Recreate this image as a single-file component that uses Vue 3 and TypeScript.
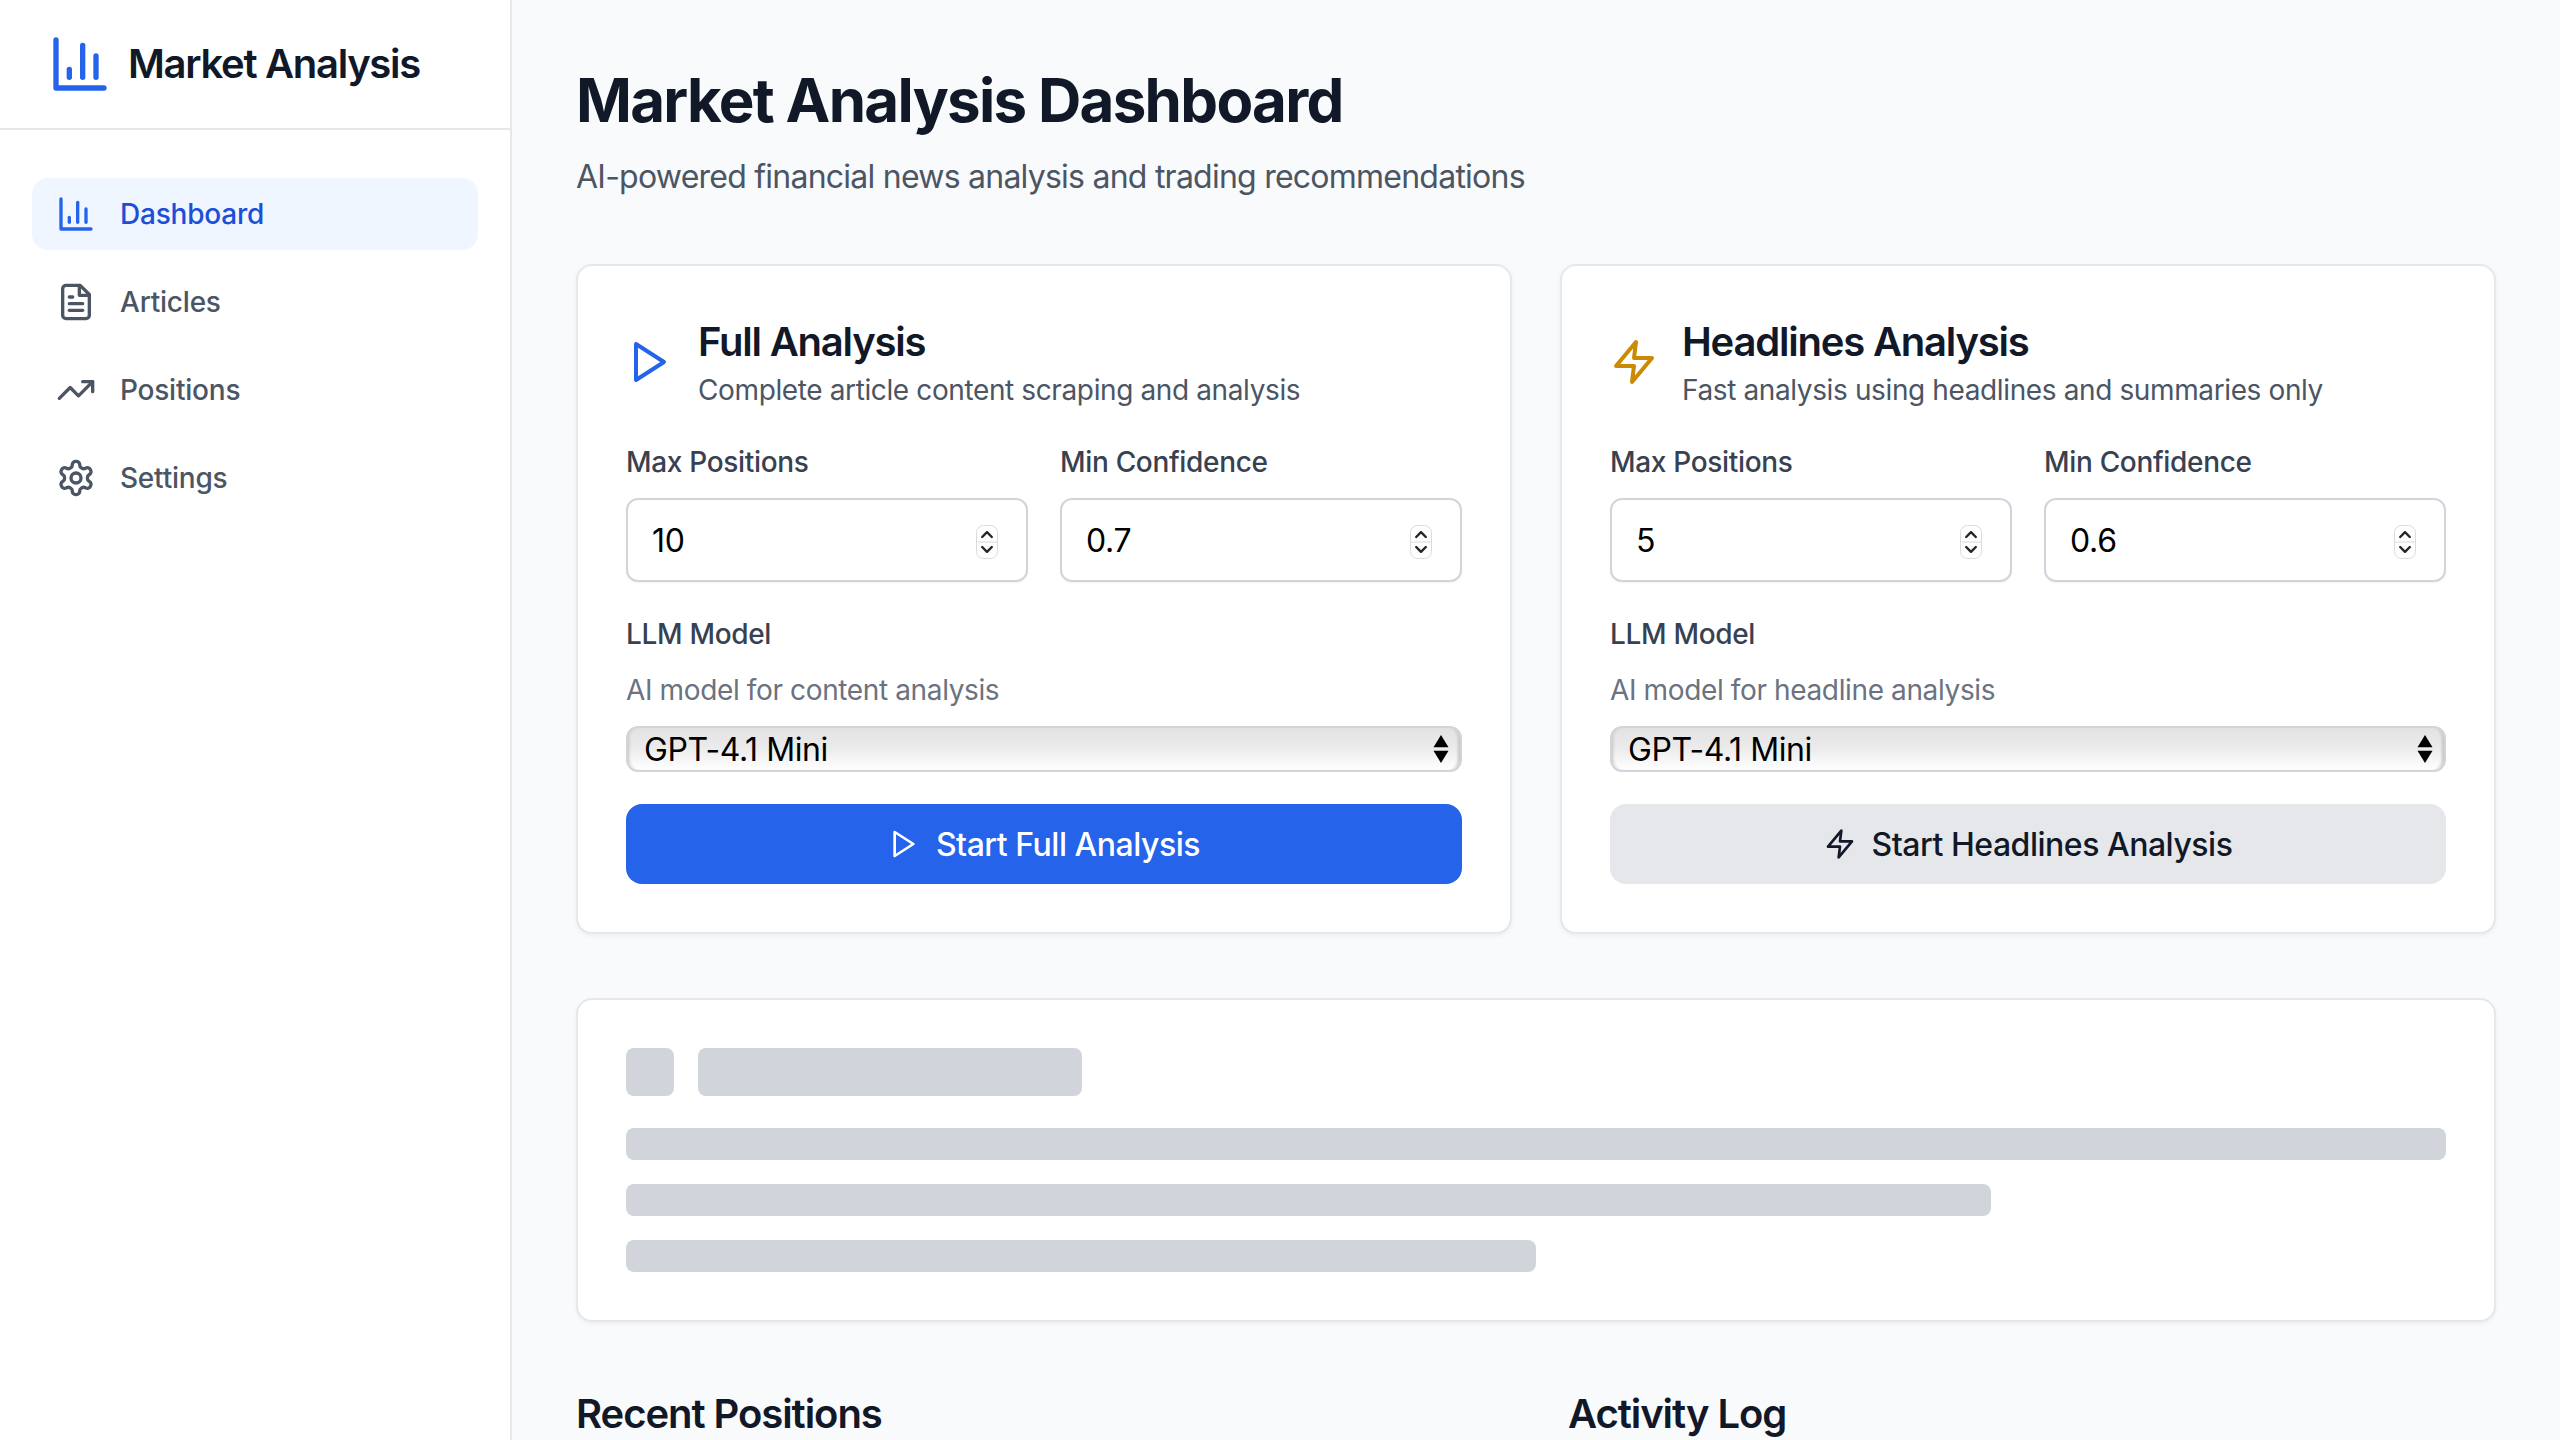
<script setup lang="ts">
import { ref } from 'vue'

const chart = ['M3 3v18h18', 'M18 17V9', 'M13 17V5', 'M8 17v-3']
const playPath = ['M5 3l14 9-14 9V3z']
const zapPath = ['M13 2L3 14h9l-1 8 10-12h-9l1-8z']

const navItems = [
  { label: 'Dashboard', active: true, paths: chart },
  {
    label: 'Articles',
    active: false,
    paths: [
      'M14.5 2H6a2 2 0 0 0-2 2v16a2 2 0 0 0 2 2h12a2 2 0 0 0 2-2V7.5L14.5 2z',
      'M14 2v6h6',
      'M16 13H8',
      'M16 17H8',
      'M10 9H8',
    ],
  },
  {
    label: 'Positions',
    active: false,
    paths: ['M22 7l-8.5 8.5-5-5L2 17', 'M16 7h6v6'],
  },
  {
    label: 'Settings',
    active: false,
    paths: [
      'M12.22 2h-.44a2 2 0 0 0-2 2v.18a2 2 0 0 1-1 1.73l-.43.25a2 2 0 0 1-2 0l-.15-.08a2 2 0 0 0-2.73.73l-.22.38a2 2 0 0 0 .73 2.73l.15.1a2 2 0 0 1 1 1.72v.51a2 2 0 0 1-1 1.74l-.15.09a2 2 0 0 0-.73 2.73l.22.38a2 2 0 0 0 2.73.73l.15-.08a2 2 0 0 1 2 0l.43.25a2 2 0 0 1 1 1.73V20a2 2 0 0 0 2 2h.44a2 2 0 0 0 2-2v-.18a2 2 0 0 1 1-1.73l.43-.25a2 2 0 0 1 2 0l.15.08a2 2 0 0 0 2.73-.73l.22-.39a2 2 0 0 0-.73-2.73l-.15-.08a2 2 0 0 1-1-1.74v-.5a2 2 0 0 1 1-1.74l.15-.09a2 2 0 0 0 .73-2.73l-.22-.38a2 2 0 0 0-2.73-.73l-.15.08a2 2 0 0 1-2 0l-.43-.25a2 2 0 0 1-1-1.73V4a2 2 0 0 0-2-2z',
      'M15 12a3 3 0 1 1-6 0 3 3 0 0 1 6 0z',
    ],
  },
]

const cards = ref([
  {
    title: 'Full Analysis',
    desc: 'Complete article content scraping and analysis',
    helper: 'AI model for content analysis',
    maxPositions: 10,
    minConfidence: 0.7,
    button: 'Start Full Analysis',
    icon: playPath,
    accent: 'blue',
  },
  {
    title: 'Headlines Analysis',
    desc: 'Fast analysis using headlines and summaries only',
    helper: 'AI model for headline analysis',
    maxPositions: 5,
    minConfidence: 0.6,
    button: 'Start Headlines Analysis',
    icon: zapPath,
    accent: 'gold',
  },
])

const skeletonLines = [100, 75, 50]
</script>

<template>
  <div class="layout">
    <aside class="sidebar">
      <div class="brand">
        <svg class="brand-icon" viewBox="0 0 24 24">
          <path v-for="d in chart" :key="d" :d="d" />
        </svg>
        <span class="brand-name">Market Analysis</span>
      </div>
      <nav class="nav">
        <a
          v-for="item in navItems"
          :key="item.label"
          class="nav-item"
          :class="{ active: item.active }"
        >
          <svg class="nav-icon" viewBox="0 0 24 24">
            <path v-for="d in item.paths" :key="d" :d="d" />
          </svg>
          {{ item.label }}
        </a>
      </nav>
    </aside>

    <main class="main">
      <h1 class="page-title">Market Analysis Dashboard</h1>
      <p class="page-sub">AI-powered financial news analysis and trading recommendations</p>

      <section class="cards">
        <div v-for="card in cards" :key="card.title" class="card">
          <div class="card-head">
            <svg class="card-icon" :class="card.accent" viewBox="0 0 24 24">
              <path v-for="d in card.icon" :key="d" :d="d" />
            </svg>
            <div>
              <h2 class="card-title">{{ card.title }}</h2>
              <p class="card-desc">{{ card.desc }}</p>
            </div>
          </div>

          <div class="fields">
            <label class="field">
              <span class="label">Max Positions</span>
              <span class="input-wrap">
                <input class="input" type="number" :value="card.maxPositions" />
                <svg class="spinner" viewBox="0 0 22 34">
                  <rect class="spin-box" x="0.5" y="0.5" width="21" height="33" rx="7" />
                  <path class="spin-line" d="M0.5 17h21" />
                  <path class="spin-arrow" d="M6.2 12L11 7.2 15.8 12" />
                  <path class="spin-arrow" d="M6.2 22L11 26.8 15.8 22" />
                </svg>
              </span>
            </label>
            <label class="field">
              <span class="label">Min Confidence</span>
              <span class="input-wrap">
                <input class="input" type="number" step="0.1" :value="card.minConfidence" />
                <svg class="spinner" viewBox="0 0 22 34">
                  <rect class="spin-box" x="0.5" y="0.5" width="21" height="33" rx="7" />
                  <path class="spin-line" d="M0.5 17h21" />
                  <path class="spin-arrow" d="M6.2 12L11 7.2 15.8 12" />
                  <path class="spin-arrow" d="M6.2 22L11 26.8 15.8 22" />
                </svg>
              </span>
            </label>
          </div>

          <span class="label model-label">LLM Model</span>
          <p class="helper">{{ card.helper }}</p>
          <div class="select-wrap">
            <select class="select">
              <option>GPT-4.1 Mini</option>
            </select>
            <svg class="select-arrows" viewBox="0 0 16 30" preserveAspectRatio="none">
              <path d="M8 0l7.5 13H.5z" />
              <path d="M.5 17h15L8 30z" />
            </svg>
          </div>

          <button class="btn" :class="card.accent" type="button">
            <svg class="btn-icon" viewBox="0 0 24 24">
              <path v-for="d in card.icon" :key="d" :d="d" />
            </svg>
            {{ card.button }}
          </button>
        </div>
      </section>

      <section class="card skeleton-card">
        <div class="skeleton-head">
          <div class="skeleton sq"></div>
          <div class="skeleton heading"></div>
        </div>
        <div class="skeleton-lines">
          <div
            v-for="w in skeletonLines"
            :key="w"
            class="skeleton line"
            :style="{ width: w + '%' }"
          ></div>
        </div>
      </section>

      <section class="bottom">
        <h2 class="section-title">Recent Positions</h2>
        <h2 class="section-title">Activity Log</h2>
      </section>
    </main>
  </div>
</template>

<style scoped>
.layout {
  display: flex;
  height: 1440px;
  overflow: hidden;
  background: #f9fafb;
  color: #111827;
  font-family: Inter, "Liberation Sans", sans-serif;
}

.sidebar {
  flex: 0 0 512px;
  box-sizing: border-box;
  background: #fff;
  border-right: 2px solid #e5e7eb;
}

.brand {
  display: flex;
  align-items: center;
  gap: 16px;
  padding: 32px 48px;
  border-bottom: 2px solid #e5e7eb;
}

.brand-icon {
  width: 64px;
  height: 64px;
  fill: none;
  stroke: #2563eb;
  stroke-width: 2;
  stroke-linecap: round;
  stroke-linejoin: round;
}

.brand-name {
  font-size: 40px;
  line-height: 56px;
  font-weight: 600;
  letter-spacing: -1.3px;
}

.nav {
  display: flex;
  flex-direction: column;
  gap: 16px;
  padding: 48px 32px;
}

.nav-item {
  display: flex;
  align-items: center;
  gap: 24px;
  height: 72px;
  padding: 0 24px;
  border-radius: 16px;
  font-size: 28px;
  font-weight: 500;
  letter-spacing: -0.22px;
  color: #4b5563;
}

.nav-item.active {
  background: #eff6ff;
  color: #1d4ed8;
}

.nav-icon {
  width: 40px;
  height: 40px;
  fill: none;
  stroke: currentColor;
  stroke-width: 2;
  stroke-linecap: round;
  stroke-linejoin: round;
}

.nav-item.active .nav-icon {
  stroke: #2563eb;
}

.main {
  flex: 1;
  min-width: 0;
  padding: 64px;
}

.page-title {
  margin: 0;
  font-size: 60px;
  line-height: 72px;
  font-weight: 700;
  letter-spacing: -1.7px;
}

.page-sub {
  margin: 17px 0 0;
  font-size: 32px;
  line-height: 48px;
  letter-spacing: -0.76px;
  color: #4b5563;
}

.cards {
  display: grid;
  grid-template-columns: 1fr 1fr;
  gap: 48px;
  margin-top: 63px;
}

.card {
  padding: 48px;
  background: #fff;
  border: 2px solid #e5e7eb;
  border-radius: 16px;
  box-shadow: 0 2px 4px rgba(0, 0, 0, 0.05);
}

.card-head {
  display: flex;
  align-items: center;
  gap: 24px;
}

.card-icon {
  flex: none;
  width: 48px;
  height: 48px;
  fill: none;
  stroke-width: 2;
  stroke-linecap: round;
  stroke-linejoin: round;
}

.card-icon.blue {
  stroke: #2563eb;
}

.card-icon.gold {
  stroke: #ca8a04;
}

.card-title {
  margin: 0;
  font-size: 40px;
  line-height: 56px;
  font-weight: 600;
  letter-spacing: -1.2px;
}

.card-desc {
  margin: 0;
  font-size: 28px;
  line-height: 40px;
  letter-spacing: -0.38px;
  color: #4b5563;
}

.fields {
  display: grid;
  grid-template-columns: 1fr 1fr;
  gap: 32px;
  margin-top: 32px;
}

.field {
  display: block;
  min-width: 0;
}

.label {
  display: block;
  font-size: 28px;
  line-height: 40px;
  font-weight: 500;
  letter-spacing: -0.32px;
  color: #374151;
}

.input-wrap {
  position: relative;
  display: block;
  margin-top: 16px;
}

.input {
  display: block;
  box-sizing: border-box;
  width: 100%;
  height: 84px;
  padding: 0 24px;
  background: #fff;
  border: 2px solid #d1d5db;
  border-radius: 12px;
  box-shadow: 0 1px 2px rgba(0, 0, 0, 0.05);
  font-family: inherit;
  font-size: 32px;
  letter-spacing: -0.3px;
  color: #000;
  appearance: textfield;
  outline: none;
}

.spinner {
  position: absolute;
  top: 27px;
  right: 30px;
  width: 22px;
  height: 34px;
}

.spin-box {
  fill: #fff;
  stroke: #dcdcdc;
}

.spin-line {
  stroke: #d8d8d8;
  fill: none;
}

.spin-arrow {
  fill: none;
  stroke: #262626;
  stroke-width: 2.4;
  stroke-linecap: round;
  stroke-linejoin: round;
}

.model-label {
  margin-top: 32px;
}

.helper {
  margin: 16px 0 0;
  font-size: 28px;
  line-height: 40px;
  letter-spacing: -0.37px;
  color: #6b7280;
}

.select-wrap {
  position: relative;
  margin-top: 16px;
}

.select {
  display: block;
  box-sizing: border-box;
  width: 100%;
  height: 46px;
  padding: 0 48px 0 16px;
  background: linear-gradient(to bottom, #e2e2e2, #ececec 50%, #fff);
  border: 2px solid #d1d5db;
  border-radius: 12px;
  box-shadow: inset 3px 0 3px -2px #c4c4c4, inset -4px 0 3px -2px #c4c4c4;
  font-family: inherit;
  font-size: 32px;
  letter-spacing: -0.4px;
  color: #000;
  appearance: none;
  outline: none;
}

.select-arrows {
  position: absolute;
  top: 9px;
  right: 13px;
  width: 16px;
  height: 28px;
  fill: #000;
}

.btn {
  display: flex;
  align-items: center;
  justify-content: center;
  gap: 16px;
  width: 100%;
  height: 80px;
  margin-top: 32px;
  border: 0;
  border-radius: 16px;
  font-family: inherit;
  font-size: 32px;
  font-weight: 500;
  letter-spacing: -0.48px;
}

.btn.blue {
  background: #2563eb;
  color: #fff;
}

.btn.gold {
  background: #e5e7eb;
  color: #111827;
}

.btn-icon {
  width: 32px;
  height: 32px;
  fill: none;
  stroke: currentColor;
  stroke-width: 2;
  stroke-linecap: round;
  stroke-linejoin: round;
}

.skeleton-card {
  margin-top: 64px;
}

.skeleton-head {
  display: flex;
  gap: 24px;
}

.skeleton {
  background: #d1d5db;
  border-radius: 8px;
}

.skeleton.sq {
  width: 48px;
  height: 48px;
}

.skeleton.heading {
  width: 384px;
  height: 48px;
}

.skeleton-lines {
  display: flex;
  flex-direction: column;
  gap: 24px;
  margin-top: 32px;
}

.skeleton.line {
  height: 32px;
}

.bottom {
  display: grid;
  grid-template-columns: 1fr 1fr;
  gap: 64px;
  margin-top: 64px;
}

.section-title {
  margin: 0;
  font-size: 40px;
  line-height: 56px;
  font-weight: 600;
  letter-spacing: -1.05px;
}
</style>
